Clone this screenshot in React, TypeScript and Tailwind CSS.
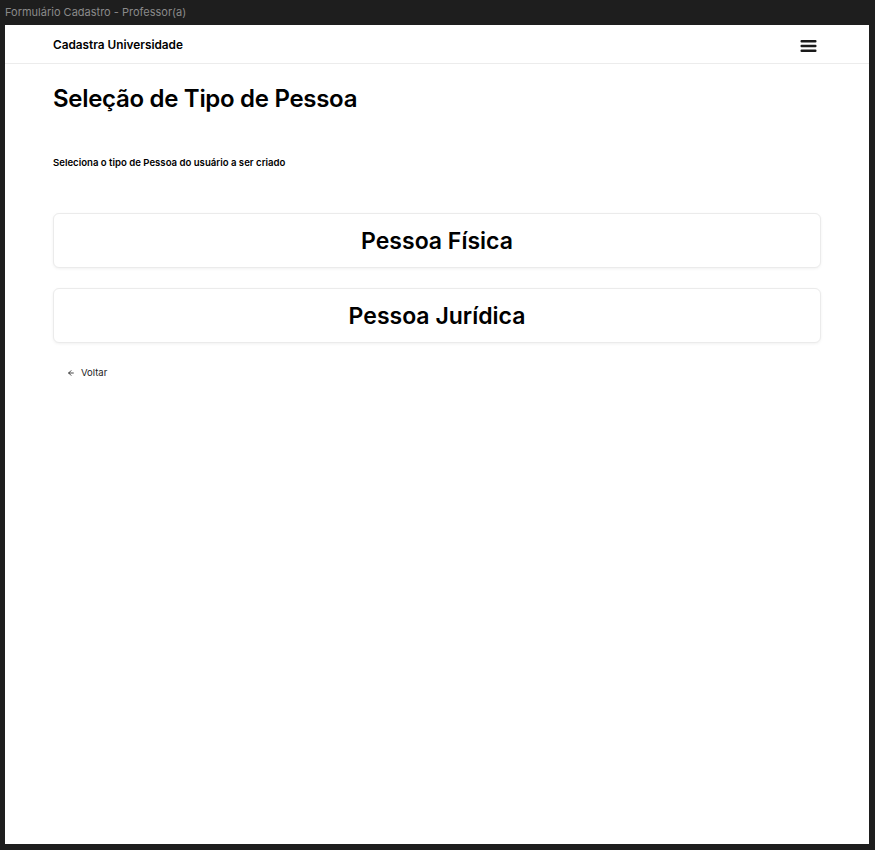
import React from "react";

export default function App() {
  return (
    <div
      className="w-[875px] h-[850px] bg-[#1e1e1e] flex flex-col"
      style={{ fontFamily: "Inter, 'Noto Sans', sans-serif" }}
    >
      <div className="h-[25px] flex items-center pl-[5px] text-[11px] text-[#8a8a8a]">
        Formulário Cadastro - Professor(a)
      </div>
      <div className="ml-[5px] w-[864px] h-[819px] bg-white flex flex-col">
        <header className="h-[39px] pt-[4px] border-b border-[#ececec] px-12 flex items-center justify-between">
          <span className="text-[11.8px] font-semibold text-black">Cadastra Universidade</span>
          <svg width="17" height="14" viewBox="0 0 17 14" className="mr-[4px] -mt-[1px]">
            <rect x="0.5" y="1" width="16" height="2.6" rx="1" fill="#1a1a1a" />
            <rect x="0.5" y="5.7" width="16" height="2.6" rx="1" fill="#1a1a1a" />
            <rect x="0.5" y="10.4" width="16" height="2.6" rx="1" fill="#1a1a1a" />
          </svg>
        </header>
        <main className="px-12 flex flex-col">
          <h1 className="mt-[19px] text-[24px] leading-[32px] font-semibold text-black tracking-[-0.3px]">
            Seleção de Tipo de Pessoa
          </h1>
          <p className="mt-[41px] text-[9.6px] leading-[14px] font-semibold text-black">
            Seleciona o tipo de Pessoa do usuário a ser criado
          </p>
          <div className="mt-[43px] flex flex-col gap-[20px]">
            <button className="h-[55px] w-full rounded-md border border-[#ebebeb] bg-white shadow-[0_1px_3px_rgba(0,0,0,0.06)] text-[23px] font-semibold text-black flex items-center justify-center pt-[2px]">
              Pessoa Física
            </button>
            <button className="h-[55px] w-full rounded-md border border-[#ebebeb] bg-white shadow-[0_1px_3px_rgba(0,0,0,0.06)] text-[23px] font-semibold text-black flex items-center justify-center pt-[2px]">
              Pessoa Jurídica
            </button>
          </div>
          <button className="mt-[23px] ml-[14px] self-start flex items-center gap-[6px] text-[9.5px] leading-[14px] text-[#222]">
            <svg width="8" height="8" viewBox="0 0 24 24" fill="none" stroke="#222" strokeWidth="2.5" strokeLinecap="round" strokeLinejoin="round">
              <path d="M19 12H5" />
              <path d="M12 19l-7-7 7-7" />
            </svg>
            Voltar
          </button>
        </main>
      </div>
    </div>
  );
}
